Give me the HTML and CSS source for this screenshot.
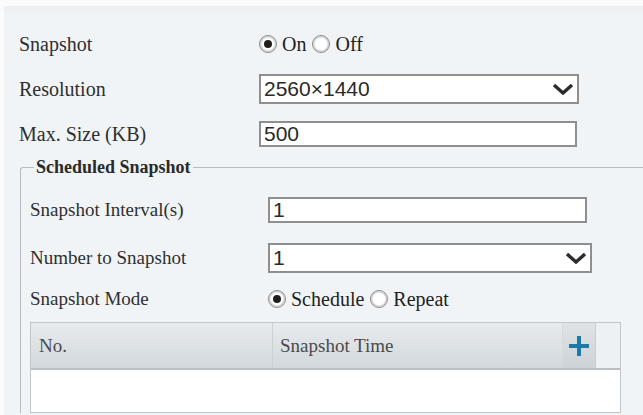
FILE: index.html
```html
<!DOCTYPE html>
<html>
<head>
	<meta charset="utf-8">
	<title>Snapshot</title>
	<link rel="stylesheet" href="styles.css">
</head>
<body>
<div class="panel">
	<div class="row">
		<div class="lbl">Snapshot</div>
		<div class="radios">
			<span class="radio on"></span><span class="rtext">On</span>
			<span class="radio"></span><span class="rtext">Off</span>
		</div>
	</div>
	<div class="row">
		<div class="lbl">Resolution</div>
		<div class="select res">
			<span>2560×1440</span>
			<svg class="chev" width="22" height="12" viewBox="0 0 22 12"><path d="M2 2 L11 10 L20 2" fill="none" stroke="#2b2b2b" stroke-width="3.4"/></svg>
		</div>
	</div>
	<div class="row">
		<div class="lbl">Max. Size (KB)</div>
		<div class="input maxsize">500</div>
	</div>

	<fieldset class="sched">
		<legend>Scheduled Snapshot</legend>
		<div class="row row2 introw">
			<div class="lbl">Snapshot Interval(s)</div>
			<div class="input interval">1</div>
		</div>
		<div class="row row2 numrow">
			<div class="lbl">Number to Snapshot</div>
			<div class="select number">
				<span>1</span>
				<svg class="chev" width="22" height="12" viewBox="0 0 22 12"><path d="M2 2 L11 10 L20 2" fill="none" stroke="#2b2b2b" stroke-width="3.4"/></svg>
			</div>
		</div>
		<div class="row row2 moderow">
			<div class="lbl">Snapshot Mode</div>
			<div class="radios">
				<span class="radio on"></span><span class="rtext">Schedule</span>
				<span class="radio"></span><span class="rtext">Repeat</span>
			</div>
		</div>

		<div class="tbl">
			<div class="thead">
				<div class="th c-no">No.</div>
				<div class="th c-time">Snapshot Time</div>
				<div class="th c-add">
					<svg width="22" height="22" viewBox="0 0 22 22"><path d="M11 1 V21 M1 11 H21" stroke="#1a7aa8" stroke-width="4"/></svg>
				</div>
				<div class="th c-pad"></div>
			</div>
			<div class="tbody"></div>
		</div>
	</fieldset>
</div>
</body>
</html>
```

FILE: styles.css
```css
html, body {
	margin: 0;
	padding: 0;
	background: #fbfbfb;
}
body {
	font-family: "Liberation Serif", "Times New Roman", serif;
	color: #2f2f2f;
	overflow: hidden;
}
.panel {
	margin: 6px 0 0 4px;
	height: 409px;
	padding: 23px 0 0 15px;
	box-sizing: border-box;
	background: linear-gradient(#eeeff0, #f1f4f7 12px, #f1f4f7);
}
.row {
	display: flex;
	align-items: center;
	height: 30px;
	margin-bottom: 15px;
}
.lbl {
	width: 240px;
	font-size: 20px;
	flex: none;
}
.radios {
	display: flex;
	align-items: center;
	font-family: "Liberation Serif", "Times New Roman", serif;
	font-size: 20px;
	color: #1f1f1f;
}
.radio {
	width: 16px;
	height: 16px;
	border: 1px solid #8a8a8a;
	border-radius: 50%;
	background: #fff;
	box-shadow: inset 0 0 0 1.5px #d6d6d6;
	position: relative;
	margin-right: 5px;
}
.radio.on::after {
	content: "";
	position: absolute;
	left: 4px;
	top: 4px;
	width: 8px;
	height: 8px;
	border-radius: 50%;
	background: #1e1e1e;
}
.rtext {
	margin-right: 6px;
}
.select, .input {
	box-sizing: border-box;
	background: #fff;
	border: 2px solid #8f8f8f;
	font-family: "Liberation Sans", Arial, sans-serif;
	font-size: 21px;
	color: #2a2a2a;
	display: flex;
	align-items: center;
	padding-left: 3px;
}
.select {
	height: 30px;
	justify-content: space-between;
	padding-right: 3px;
}
.input {
	height: 26px;
}
.res {
	width: 320px;
}
.maxsize {
	width: 318px;
}
.sched {
	margin: -7px 0 0 1px;
	padding: 17px 0 0 9px;
	border: 1px solid #b8bcc0;
	border-right: none;
	border-bottom: none;
	border-radius: 3px 0 0 0;
}
.sched legend {
	font-size: 18px;
	font-weight: bold;
	padding: 0 2px;
	margin-left: 4px;
	color: #2a2a2a;
}
.row2 .lbl {
	width: 238px;
	font-size: 19px;
}
.introw {
	margin-bottom: 18px;
}
.interval {
	width: 319px;
}
.numrow {
	margin-bottom: 11px;
}
.number {
	width: 324px;
}
.moderow {
	margin-bottom: 8px;
}
.tbl {
	width: 589px;
	border: 1px solid #bfc5c9;
	font-size: 19px;
}
.thead {
	display: flex;
	height: 45px;
	border-bottom: 2px solid #b9c0c5;
}
.th {
	display: flex;
	align-items: center;
	background: linear-gradient(#e8ebee, #d2d8dc);
	color: #4a4a4a;
}
.c-no {
	width: 233px;
	padding-left: 8px;
	border-right: 1px solid #cbd0d4;
}
.c-time {
	width: 282px;
	padding-left: 7px;
}
.c-add {
	width: 32px;
	justify-content: center;
	background: linear-gradient(#dfe3e6, #cdd3d7);
	border-left: 1px solid #d5dadd;
}
.c-pad {
	flex: 1;
	background: #eef1f3;
	border-left: 1px solid #c7cdd1;
}
.tbody {
	height: 42px;
	background: #fff;
}
```
